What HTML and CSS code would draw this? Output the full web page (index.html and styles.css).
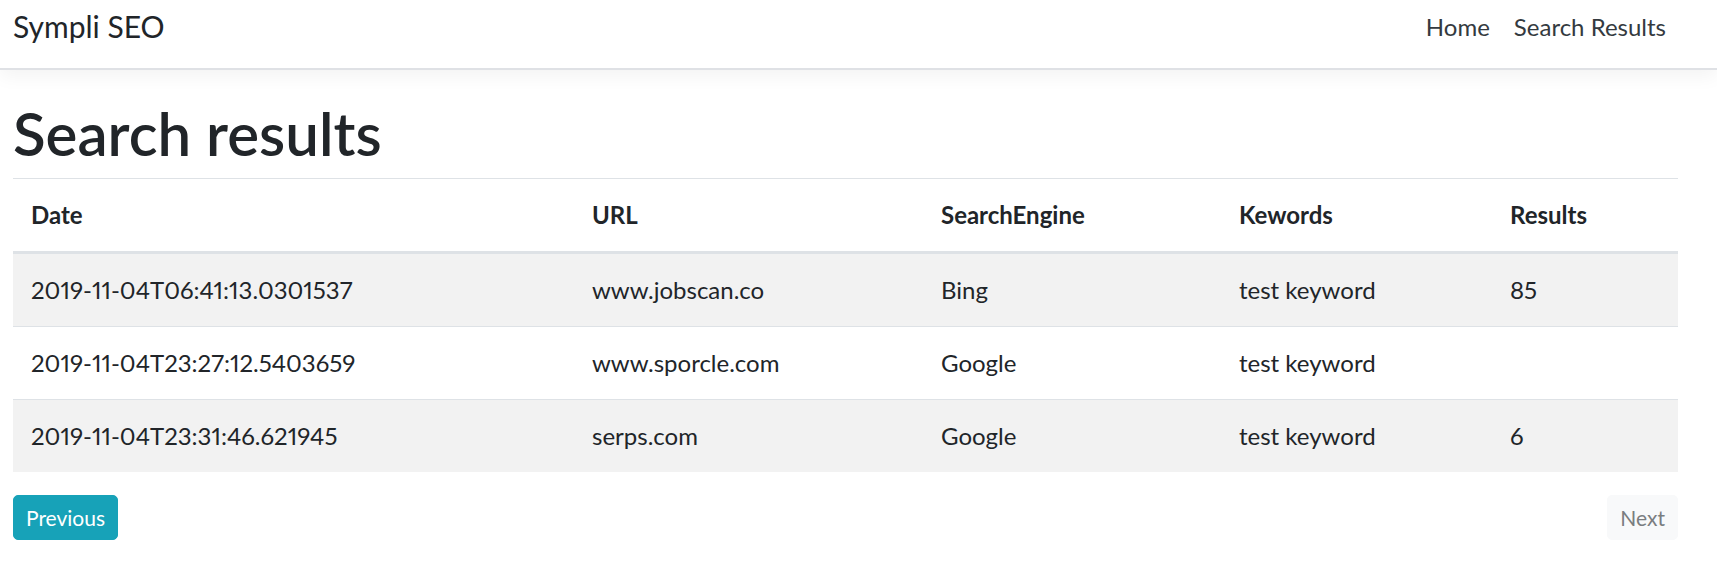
FILE: index.html
```html
<!DOCTYPE html>
<html lang="en">
<head>
<meta charset="utf-8">
<title>Search results - Sympli SEO</title>
<link rel="stylesheet" href="styles.css">
</head>
<body>
<header class="navbar">
  <a class="brand" href="#">Sympli SEO</a>
  <nav class="nav">
    <a class="nav-link" href="#">Home</a>
    <a class="nav-link" href="#">Search Results</a>
  </nav>
</header>
<main class="content">
  <h1 class="title">Search results</h1>
  <table class="results">
    <thead>
      <tr>
        <th class="col-date">Date</th>
        <th class="col-url">URL</th>
        <th class="col-engine">SearchEngine</th>
        <th class="col-kw">Kewords</th>
        <th class="col-res">Results</th>
      </tr>
    </thead>
    <tbody>
      <tr>
        <td>2019-11-04T06:41:13.0301537</td>
        <td>www.jobscan.co</td>
        <td>Bing</td>
        <td>test keyword</td>
        <td>85</td>
      </tr>
      <tr>
        <td>2019-11-04T23:27:12.5403659</td>
        <td>www.sporcle.com</td>
        <td>Google</td>
        <td>test keyword</td>
        <td></td>
      </tr>
      <tr>
        <td>2019-11-04T23:31:46.621945</td>
        <td>serps.com</td>
        <td>Google</td>
        <td>test keyword</td>
        <td>6</td>
      </tr>
    </tbody>
  </table>
  <div class="pager">
    <a class="btn btn-prev" href="#">Previous</a>
    <a class="btn btn-next" href="#">Next</a>
  </div>
</main>
</body>
</html>
```

FILE: styles.css
```css
* { box-sizing: border-box; }

html, body {
  margin: 0;
  padding: 0;
  background: #fff;
}

body {
  font-family: Lato, "Open Sans", "Liberation Sans", sans-serif;
  font-size: 24px;
  line-height: 36px;
  color: #212529;
}

a { text-decoration: none; }

.navbar {
  display: flex;
  justify-content: space-between;
  align-items: flex-start;
  height: 70px;
  padding: 0 39px 0 13px;
  background: #fff;
  border-bottom: 2px solid #dfe1e5;
  box-shadow: 0 6px 18px rgba(0, 0, 0, 0.05);
}

.brand {
  font-size: 30px;
  line-height: 45px;
  padding-top: 4px;
  color: #212529;
}

.nav {
  display: flex;
}

.nav-link {
  font-size: 24px;
  line-height: 36px;
  padding: 9px 12px 0;
  color: #343a40;
}

.content {
  padding: 0 39px 0 13px;
}

.title {
  margin: 27px 0 9px;
  font-size: 60px;
  line-height: 72px;
  font-weight: 600;
  color: #212529;
}

.results {
  width: 100%;
  border-collapse: collapse;
  table-layout: fixed;
  margin-bottom: 23px;
}

.results th,
.results td {
  padding: 18px;
  text-align: left;
  vertical-align: top;
  border-top: 1px solid #dee2e6;
  white-space: nowrap;
}

.results td {
  font-variant-numeric: proportional-nums;
}

.results th {
  font-weight: 700;
  border-bottom: 3px solid #dee2e6;
}

.results tbody tr:nth-child(odd) { background: #f2f2f2; }

.col-date { width: 561px; }
.col-url { width: 349px; }
.col-engine { width: 298px; }
.col-kw { width: 271px; }
.col-res { width: 186px; }

.pager {
  display: flex;
  justify-content: space-between;
}

.btn {
  display: inline-block;
  font-size: 21px;
  line-height: 31px;
  padding: 6px 12px;
  border: 1.5px solid transparent;
  border-radius: 5px;
}

.btn-prev {
  background: #17a2b8;
  border-color: #17a2b8;
  color: #fff;
}

.btn-next {
  background: #f8f9fa;
  border-color: #f8f9fa;
  color: #7a7d80;
}
```
